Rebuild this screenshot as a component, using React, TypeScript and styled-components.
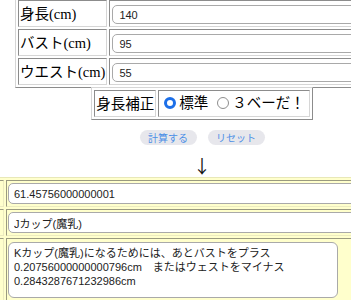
import styled, { createGlobalStyle } from 'styled-components';

const Global = createGlobalStyle`
  html, body { margin: 0; padding: 0; background: #fff; overflow: hidden; }
  body { width: 351px; height: 300px; }
`;

const Page = styled.div`
  width: 404px;
  display: flex; flex-direction: column; align-items: center;
  font-family: "Liberation Serif", "Noto Sans CJK JP", serif;
  color: #000;
`;

const SizeTable = styled.table`
  width: 374px; margin-top: -3px; flex-shrink: 0;
  border: 1px solid; border-color: #d6d6d6 #8c8c8c #8c8c8c #d6d6d6;
  border-spacing: 2px;
`;

const Label = styled.th`
  width: 85px; padding: 0 1px;
  font-size: 14.5px; font-weight: normal; text-align: left; white-space: nowrap;
  line-height: 20px;
  border: 1px solid; border-color: #8c8c8c #d6d6d6 #d6d6d6 #8c8c8c;
`;

const Field = styled.td`
  padding: 4px 2px 2px;
  border: 1px solid; border-color: #8c8c8c #d6d6d6 #d6d6d6 #8c8c8c;
`;

const TextInput = styled.input`
  display: block; box-sizing: border-box; width: 100%; height: 19px; margin: 0;
  padding: 0 6px;
  border: 1px solid #a9a9a9; border-radius: 5px; background: #fff;
  font: 11px "Liberation Sans", "Noto Sans CJK JP", sans-serif; color: #222;
  outline: none;
`;

const OptionTable = styled.table`
  flex-shrink: 0; margin-top: -1px;
  border: 1px solid; border-color: #d6d6d6 #8c8c8c #8c8c8c #d6d6d6;
  border-spacing: 2px;
`;

const OptionCell = styled.td`
  padding: 0 1px; height: 24px;
  font-size: 14.5px; line-height: 24px; white-space: nowrap;
  border: 1px solid; border-color: #8c8c8c #d6d6d6 #d6d6d6 #8c8c8c;
`;

const Choice = styled.label<{ $last?: boolean }>`
  display: inline-flex; align-items: center;
  margin-right: ${p => (p.$last ? '3px' : '5px')};
`;

const Radio = styled.input.attrs({ type: 'radio' })`
  appearance: none; box-sizing: border-box;
  width: 12px; height: 12px; margin: 0 3px 0 4px; border-radius: 50%;
  border: 1px solid #8e8e8e; background: #fff;
  &:checked { border: 3.5px solid #1c6fe8; }
`;

const Buttons = styled.div`
  display: flex; gap: 11px; margin-top: 10px;
`;

const Pill = styled.button`
  width: 57px; height: 15px; padding: 0;
  border: none; border-radius: 8px; background: #e7e7ec;
  font: 10px "Noto Sans CJK JP", sans-serif; line-height: 15px; color: #4c8fe6;
`;

const Arrow = styled.div`
  margin-top: 9px; height: 22px;
  font: 18px "Noto Sans CJK JP", sans-serif; line-height: 22px; color: #111;
`;

const ResultTable = styled.table`
  width: 560px; flex-shrink: 0; margin-top: 1px;
  background: #ffffcc;
  border: 1px solid; border-color: #e8e8b8 #9a9a80 #9a9a80 #e8e8b8;
  border-spacing: 2px;
`;

const ResultLabel = styled.th`
  width: 77px; padding: 0;
  border: 1px solid; border-color: #9a9a80 #ecebc0 #ecebc0 #9a9a80;
`;

const ResultField = styled.td`
  padding: 2px 1px;
  border: 1px solid; border-color: #9a9a80 #ecebc0 #ecebc0 #9a9a80;
`;

const ResultInput = styled(TextInput)`
  height: 21px; padding: 0 5px;
`;

const Note = styled.textarea`
  display: block; box-sizing: border-box; width: 330px; height: 56px; margin: 1px 0 0;
  padding: 3px 5px;
  border: 1px solid #a9a9a9; border-radius: 6px; background: #fff; resize: none;
  font: 11px "Liberation Sans", "Noto Sans CJK JP", sans-serif; line-height: 14px; color: #222;
  outline: none;
`;

const rows = [
  { label: '身長(cm)', value: '140' },
  { label: 'バスト(cm)', value: '95' },
  { label: 'ウエスト(cm)', value: '55' },
];

export default function App() {
  return (
    <Page>
      <Global />
      <SizeTable>
        <tbody>
          {rows.map(r => (
            <tr key={r.label}>
              <Label>{r.label}</Label>
              <Field><TextInput defaultValue={r.value} /></Field>
            </tr>
          ))}
        </tbody>
      </SizeTable>

      <OptionTable>
        <tbody>
          <tr>
            <OptionCell>身長補正</OptionCell>
            <OptionCell>
              <Choice><Radio name="adj" defaultChecked />標準</Choice>
              <Choice $last><Radio name="adj" />３ベーだ！</Choice>
            </OptionCell>
          </tr>
        </tbody>
      </OptionTable>

      <Buttons>
        <Pill>計算する</Pill>
        <Pill>リセット</Pill>
      </Buttons>

      <Arrow>↓</Arrow>

      <ResultTable>
        <tbody>
          <tr>
            <ResultLabel />
            <ResultField><ResultInput defaultValue="61.45756000000001" readOnly /></ResultField>
          </tr>
          <tr>
            <ResultLabel />
            <ResultField><ResultInput defaultValue="Jカップ(魔乳)" readOnly /></ResultField>
          </tr>
          <tr>
            <ResultLabel />
            <ResultField>
              <Note
                readOnly
                defaultValue="Kカップ(魔乳)になるためには、あとバストをプラス0.20756000000000796cm　またはウェストをマイナス0.2843287671232986cm"
              />
            </ResultField>
          </tr>
        </tbody>
      </ResultTable>
    </Page>
  );
}
